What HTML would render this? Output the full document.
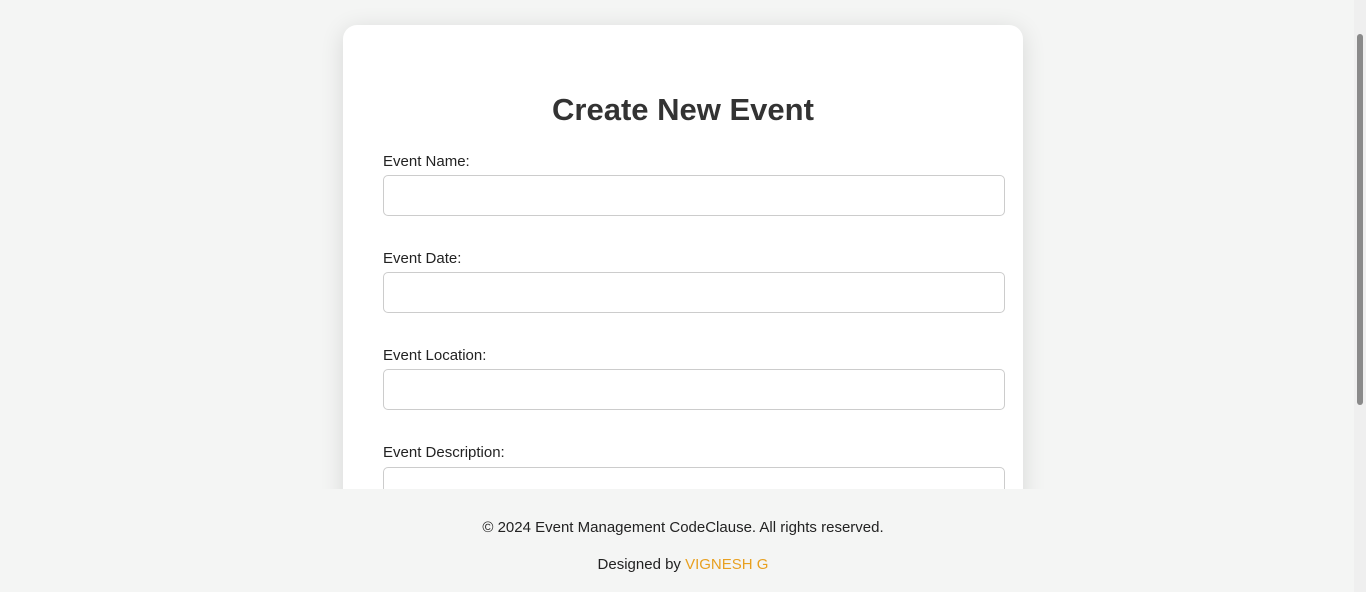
<!DOCTYPE html>
<html><head><style>
html,body{margin:0;padding:0;}
body{width:1366px;height:592px;overflow:hidden;background:#f4f5f4;font-family:"Liberation Sans",sans-serif;position:relative;}
.card{position:absolute;left:343px;top:25px;width:680px;height:520px;background:#fff;border-radius:14px;box-shadow:0 4px 24px rgba(0,0,0,0.12);}
h1{position:absolute;left:0;width:680px;top:88px;margin:0;text-align:center;font-size:31px;font-weight:bold;color:#333;line-height:44px;}
.lab{position:absolute;left:383px;font-size:15px;color:#222;line-height:20px;}
.inp{position:absolute;left:383px;width:620px;height:39px;border:1px solid #ccc;border-radius:5px;background:#fff;}
.foot{position:absolute;left:0;top:489px;width:1354px;height:103px;background:#f4f5f4;}
.f1,.f2{position:absolute;width:1366px;left:0;text-align:center;font-size:15px;color:#222;}
.f1{top:519px}.f2{top:556px}
.f2 span{color:#e8a020}
.track{position:absolute;left:1354px;top:0;width:12px;height:592px;background:#efefef;}
.thumb{position:absolute;left:1357px;top:34px;width:6px;height:371px;background:#8a8a8a;border-radius:3px;}
</style></head><body>
<div class="card"></div>
<h1 style="left:343px">Create New Event</h1>
<div class="lab" style="top:152px">Event Name:</div>
<div class="inp" style="top:175px"></div>
<div class="lab" style="top:249px">Event Date:</div>
<div class="inp" style="top:272px"></div>
<div class="lab" style="top:346px">Event Location:</div>
<div class="inp" style="top:369px"></div>
<div class="lab" style="top:443px">Event Description:</div>
<div class="inp" style="top:467px;height:60px"></div>
<div class="foot"></div>
<div class="f1">© 2024 Event Management CodeClause. All rights reserved.</div>
<div class="f2">Designed by <span>VIGNESH G</span></div>
<div class="track"></div><div class="thumb"></div>
</body></html>
